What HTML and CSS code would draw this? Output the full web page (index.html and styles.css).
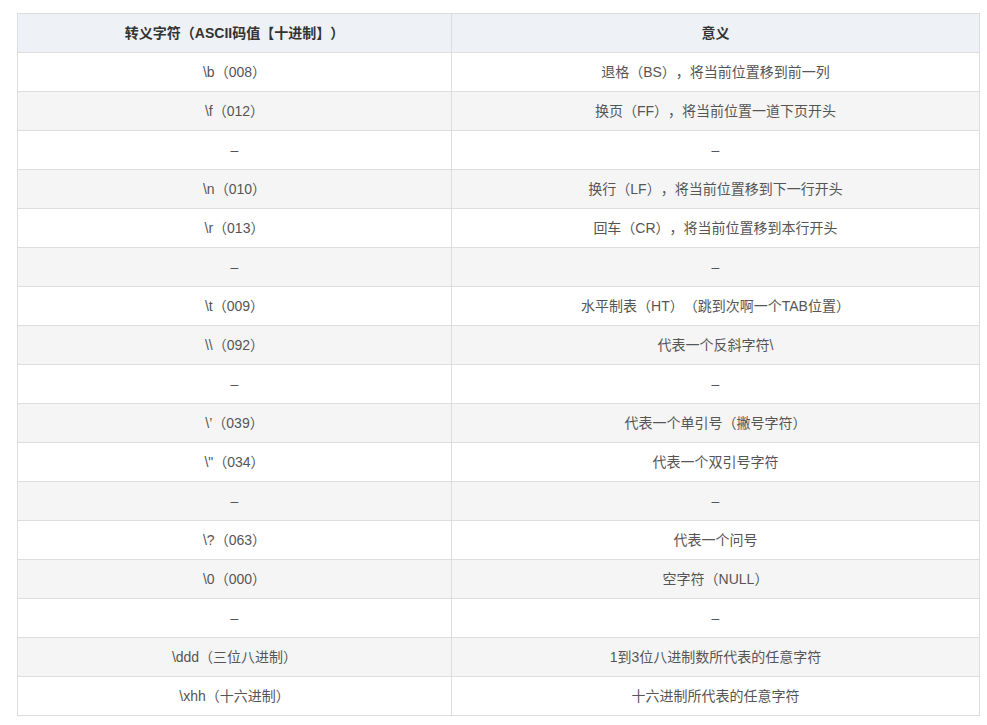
FILE: index.html
```html
<!DOCTYPE html>
<html lang="zh">
<head>
<meta charset="utf-8">
<link rel="stylesheet" href="styles.css">
</head>
<body>
<table class="tbl">
<colgroup><col class="c1"><col class="c2"></colgroup>
<thead>
<tr><th>转义字符（ASCII码值【十进制】）</th><th>意义</th></tr>
</thead>
<tbody>
<tr><td>\b（008）</td><td>退格（BS），将当前位置移到前一列</td></tr>
<tr><td>\f（012）</td><td>换页（FF），将当前位置一道下页开头</td></tr>
<tr><td>–</td><td>–</td></tr>
<tr><td>\n（010）</td><td>换行（LF），将当前位置移到下一行开头</td></tr>
<tr><td>\r（013）</td><td>回车（CR），将当前位置移到本行开头</td></tr>
<tr><td>–</td><td>–</td></tr>
<tr><td>\t（009）</td><td>水平制表（HT）（跳到次啊一个TAB位置）</td></tr>
<tr><td>\\（092）</td><td>代表一个反斜字符\</td></tr>
<tr><td>–</td><td>–</td></tr>
<tr><td>\’（039）</td><td>代表一个单引号（撇号字符）</td></tr>
<tr><td>\"（034）</td><td>代表一个双引号字符</td></tr>
<tr><td>–</td><td>–</td></tr>
<tr><td>\?（063）</td><td>代表一个问号</td></tr>
<tr><td>\0（000）</td><td>空字符（NULL）</td></tr>
<tr><td>–</td><td>–</td></tr>
<tr><td>\ddd（三位八进制）</td><td>1到3位八进制数所代表的任意字符</td></tr>
<tr><td>\xhh（十六进制）</td><td>十六进制所代表的任意字符</td></tr>
</tbody>
</table>
</body>
</html>
```
FILE: styles.css
```css
html, body {
  margin: 0;
  padding: 0;
  background: #fff;
}
body {
  padding: 13px 0 0 17px;
  font-family: "Liberation Sans", "Noto Sans CJK SC", sans-serif;
  font-size: 14px;
  color: #555;
  text-spacing-trim: space-all;
}
.tbl {
  border-collapse: collapse;
  width: 962px;
  table-layout: fixed;
}
.c1 { width: 434px; }
.c2 { width: 528px; }
.tbl th, .tbl td {
  border: 1px solid #dddddd;
  height: 39px;
  padding: 0 8px;
  text-align: center;
  vertical-align: middle;
  box-sizing: border-box;
  line-height: 20px;
}
.tbl th {
  background: #eef1f5;
  font-weight: bold;
  color: #333;
}
.tbl tbody tr:nth-child(even) td {
  background: #f5f5f5;
}
```
